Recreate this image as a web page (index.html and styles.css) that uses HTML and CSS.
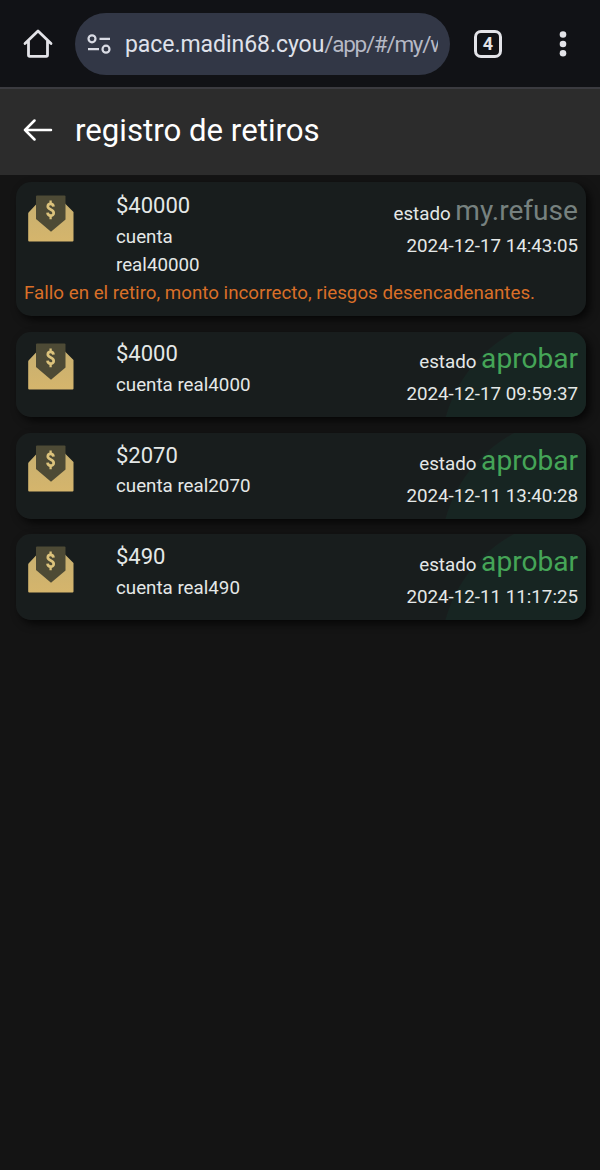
FILE: index.html
```html
<!DOCTYPE html>
<html lang="es">
<head>
    <meta charset="UTF-8">
    <meta name="viewport" content="width=device-width, initial-scale=1.0">
    <title>registro de retiros</title>
    <link rel="stylesheet" href="styles.css">
</head>
<body>
    <svg width="0" height="0" class="defs">
        <defs>
            <linearGradient id="gold" x1="0" y1="0" x2="0" y2="1">
                <stop offset="0" stop-color="#c8b070"/>
                <stop offset="1" stop-color="#d5b56c"/>
            </linearGradient>
            <symbol id="envelope" viewBox="0 0 46 47">
                <path fill="url(#gold)" d="M1 17 9 8.500H37L45.500 17V45.500Q45.500 46.500 44.500 46.500H1.200Q.2 46.500 .2 45.500V18.500Q.2 17.600 1 17z"/>
                <path fill="#4d4a35" d="M8 1.500Q8 .5 9 .5H36.500Q37.500 .5 37.500 1.500V24.500L23 36.700 8 24z"/>
                <g fill="none" stroke="#dcc37c">
                    <path stroke-width="2.700" d="M25.500 11.700C25.200 8 19.800 8.100 19.800 11.600C19.800 15 25.700 14.200 25.700 18C25.700 21.500 19.800 21.600 19.500 17.700"/>
                    <path stroke-width="2.300" d="M22.600 5.500V9M22.600 20.500V24.300"/>
                </g>
            </symbol>
        </defs>
    </svg>

    <div class="browser-bar">
        <svg class="home" width="30" height="30" viewBox="0 0 30 30" fill="none" stroke="#e3e3e8" stroke-width="2.800" stroke-linejoin="round" stroke-linecap="round">
            <path d="M2 14.500 15 2 28 14.500M5.500 12V26Q5.500 27.300 6.800 27.300H23.200Q24.500 27.300 24.500 26V12"/>
        </svg>
        <div class="address">
            <svg width="24" height="20" viewBox="0 0 24 20" fill="none" stroke="#d9dbe4" stroke-width="2.200">
                <circle cx="5" cy="4.800" r="3.500"/>
                <path d="M12.500 4.800H23M1 15.200H12"/>
                <circle cx="19" cy="15.200" r="3.500"/>
            </svg>
            <div class="url">pace.madin68.cyou<span>/app/#/my/w</span></div>
        </div>
        <div class="tabs">4</div>
        <svg class="menu" width="8" height="28" viewBox="0 0 8 28" fill="#e3e3e8">
            <circle cx="4" cy="4.500" r="3.300"/>
            <circle cx="4" cy="14" r="3.300"/>
            <circle cx="4" cy="23.300" r="3.300"/>
        </svg>
    </div>

    <div class="header">
        <svg width="30" height="22" viewBox="0 0 30 22" fill="none" stroke="#fff" stroke-width="2.500" stroke-linecap="round" stroke-linejoin="round">
            <path d="M11.500 1.500 2 11l9.500 9.500M2 11H28"/>
        </svg>
        <h1 class="title">registro de retiros</h1>
    </div>

    <div class="list">
        <div class="card refused">
            <div class="row">
                <svg class="icon"><use href="#envelope"/></svg>
                <div class="info">
                    <div class="amount">$40000</div>
                    <div class="real">cuenta<br>real40000</div>
                </div>
                <div class="state">
                    <div class="status">estado <span>my.refuse</span></div>
                    <div class="date">2024-12-17 14:43:05</div>
                </div>
            </div>
            <div class="reason">Fallo en el retiro, monto incorrecto, riesgos desencadenantes.</div>
        </div>

        <div class="card approved">
            <div class="row">
                <svg class="icon"><use href="#envelope"/></svg>
                <div class="info">
                    <div class="amount">$4000</div>
                    <div class="real">cuenta real4000</div>
                </div>
                <div class="state">
                    <div class="status">estado <span>aprobar</span></div>
                    <div class="date">2024-12-17 09:59:37</div>
                </div>
            </div>
        </div>

        <div class="card approved">
            <div class="row">
                <svg class="icon"><use href="#envelope"/></svg>
                <div class="info">
                    <div class="amount">$2070</div>
                    <div class="real">cuenta real2070</div>
                </div>
                <div class="state">
                    <div class="status">estado <span>aprobar</span></div>
                    <div class="date">2024-12-11 13:40:28</div>
                </div>
            </div>
        </div>

        <div class="card approved">
            <div class="row">
                <svg class="icon"><use href="#envelope"/></svg>
                <div class="info">
                    <div class="amount">$490</div>
                    <div class="real">cuenta real490</div>
                </div>
                <div class="state">
                    <div class="status">estado <span>aprobar</span></div>
                    <div class="date">2024-12-11 11:17:25</div>
                </div>
            </div>
        </div>
    </div>
</body>
</html>
```

FILE: styles.css
```css
* {
    box-sizing: border-box;
}
body {
    margin: 0;
    min-height: 100vh;
    background: #141414;
    color: #e4e8e7;
    font-family: Roboto, sans-serif;
    font-size: 18.75px;
}
svg {
    display: block;
    flex-shrink: 0;
}
.defs {
    position: absolute;
}

/* browser bar */
.browser-bar {
    display: flex;
    align-items: center;
    height: 89px;
    padding: 0 33px 1px 23px;
    background: #111216;
    border-bottom: 2px solid #3b3b40;
}
.home {
    margin-top: 2px;
}
.address {
    display: flex;
    align-items: center;
    gap: 14px;
    width: 375px;
    height: 62px;
    margin: 1px 24px 0 22px;
    padding: 0 12px;
    border-radius: 31px;
    background: #323746;
}
.url {
    flex: 1;
    overflow: hidden;
    padding-top: 2px;
    white-space: nowrap;
    font-size: 23px;
    line-height: 32px;
    letter-spacing: -0.05px;
    color: #dfe1ea;
}
.url span {
    color: #b6b9c5;
    font-size: 22.5px;
    letter-spacing: -1.3px;
}
.tabs {
    width: 28px;
    height: 28px;
    margin-top: 2px;
    border: 3px solid #e3e3e8;
    border-radius: 7px;
    color: #e3e3e8;
    font-size: 18px;
    font-weight: 700;
    line-height: 22px;
    text-align: center;
}
.menu {
    margin-top: 2px;
    margin-left: auto;
}

/* page header */
.header {
    display: flex;
    align-items: center;
    gap: 22px;
    height: 86px;
    padding: 0 23px 4px;
    background: #2c2c2c;
}
.title {
    margin: 0;
    padding-top: 2px;
    color: #fff;
    font-size: 31.2px;
    font-weight: 400;
    line-height: 40px;
}

/* withdrawals */
.list {
    display: flex;
    flex-direction: column;
    gap: 15.7px;
    padding: 7px 14px 0 16px;
}
.card {
    height: 85.7px;
    padding: 7.6px 8px 0;
    border-radius: 15px;
    background: #181d1d;
    box-shadow: 4px 4px 8px rgba(0, 0, 0, 0.7);
}
.refused {
    height: 134px;
    padding-top: 9px;
}
.approved {
    background: radial-gradient(circle at 564px 123px, #172522 139px, #181d1d 140px);
}
.row {
    display: flex;
}
.icon {
    width: 46px;
    height: 47px;
    margin: 4px 42px 0 4px;
}
.info {
    flex: 1;
}
.amount {
    padding-bottom: 1.5px;
    font-size: 22px;
    line-height: 30px;
}
.refused .amount {
    padding-bottom: 2px;
}
.real,
.reason {
    line-height: 28.2px;
}
.state {
    text-align: right;
}
.status {
    line-height: 40px;
}
.status span {
    font-size: 28.1px;
}
.refused .status span {
    color: #76817f;
}
.approved .status span {
    color: #45a557;
}
.date {
    line-height: 24px;
}
.reason {
    color: #d96f28;
}
```
